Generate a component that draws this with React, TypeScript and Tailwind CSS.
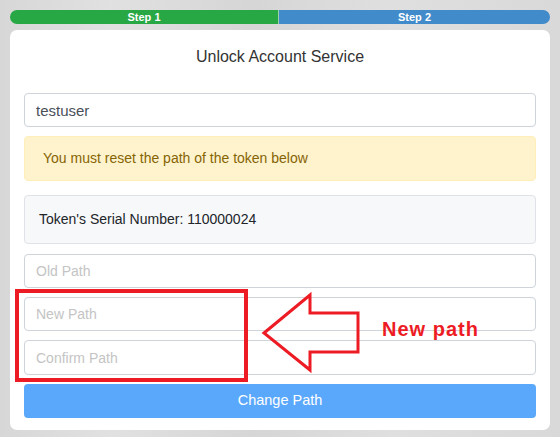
export default function App() {
  return (
    <div className="relative h-[437px] w-[560px] overflow-hidden bg-[#dcdcdc] font-['Liberation_Sans',Arial,sans-serif]">
      <div className="pointer-events-none absolute inset-0 bg-[linear-gradient(90deg,#d6d6d6_0%,#e2e2e2_20%,#d4d4d4_45%,#e0e0e0_70%,#d8d8d8_100%)] opacity-80" />
      <div className="relative px-[10px] pt-[10px]">
        <div className="flex h-[14px] w-[540px] overflow-hidden rounded-[7px] text-[11px] font-bold leading-[14px] text-white">
          <div className="w-[269px] border-r border-[#9cd3a8] bg-[#28a745] text-center">Step 1</div>
          <div className="flex-1 bg-[#428bca] text-center">Step 2</div>
        </div>
        <div className="mt-[6px] w-[540px] rounded-[7px] bg-white px-[14px] pb-[12px] pt-[16px]">
          <h1 className="text-center text-[16px] leading-[22px] text-[#333]">Unlock Account Service</h1>
          <input
            readOnly
            value="testuser"
            className="mt-[25px] block h-[34px] w-full rounded-[4px] border border-[#ced4da] px-[11px] text-[15px] text-[#495057] outline-none"
          />
          <div className="mt-[9px] flex h-[45px] items-center rounded-[4px] border border-[#ffeeba] bg-[#fff3cd] px-[18px] text-[14px] text-[#856404]">
            You must reset the path of the token below
          </div>
          <div className="mt-[14px] flex h-[49px] items-center rounded-[4px] border border-[#dfe2e6] bg-[#f7f8fa] px-[14px] text-[14px] text-[#212529]">
            Token's Serial Number: 110000024
          </div>
          <input
            readOnly
            placeholder="Old Path"
            className="mt-[10px] block h-[34px] w-full rounded-[4px] border border-[#ced4da] px-[11px] text-[14px] outline-none placeholder:text-[#c4c4c4]"
          />
          <input
            readOnly
            placeholder="New Path"
            className="mt-[9px] block h-[34px] w-full rounded-[4px] border border-[#ced4da] px-[11px] text-[14px] outline-none placeholder:text-[#c4c4c4]"
          />
          <input
            readOnly
            placeholder="Confirm Path"
            className="mt-[9px] block h-[35px] w-full rounded-[4px] border border-[#ced4da] px-[11px] text-[14px] outline-none placeholder:text-[#c4c4c4]"
          />
          <button className="mt-[9px] block h-[34px] w-full rounded-[4px] bg-[#5aa8fb] text-[14.5px] text-white">Change Path</button>
        </div>
      </div>

      <svg className="pointer-events-none absolute left-0 top-0" width="560" height="437">
        <rect x="17" y="291" width="229" height="89" fill="none" stroke="#ed1c24" strokeWidth="4" />
        <polygon
          points="264,333 310,295 310,313 358,313 358,352 310,352 310,370"
          fill="none"
          stroke="#ed1c24"
          strokeWidth="3"
          strokeLinejoin="miter"
        />
      </svg>
      <div className="absolute left-[382px] top-[317px] text-[20px] font-bold leading-[24px] tracking-[1px] text-[#ed1c24]">New path</div>
    </div>
  );
}
